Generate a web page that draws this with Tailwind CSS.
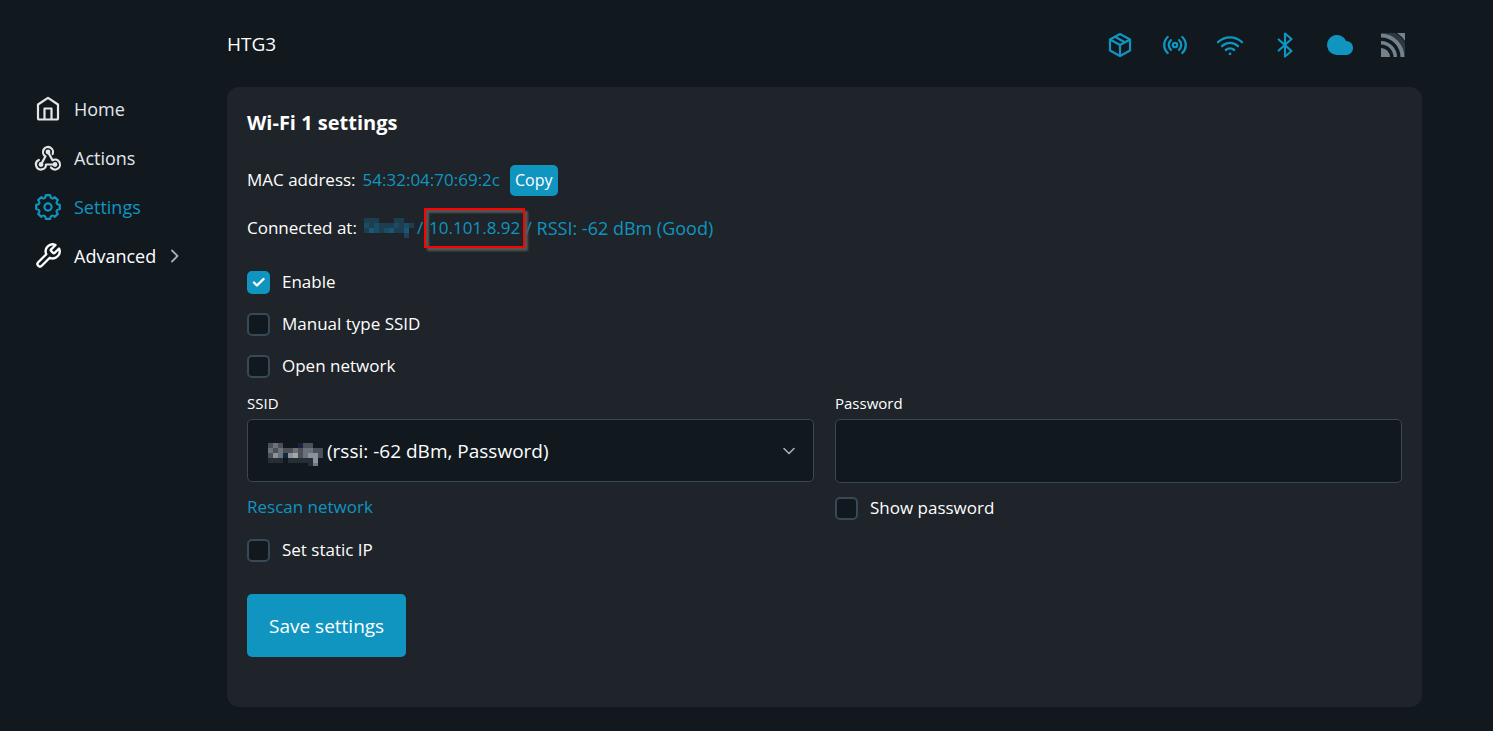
<!DOCTYPE html>
<html lang="en">
<head>
    <meta charset="UTF-8" />
    <meta name="viewport" content="width=device-width, initial-scale=1.0" />
    <title>HTG3 - Wi-Fi 1 settings</title>
    <script src="https://cdn.jsdelivr.net/npm/@tailwindcss/browser@4"></script>
    <style>
        body { font-family: 'Open Sans', 'Noto Sans', sans-serif; }
    </style>
</head>
<body class="bg-[#11191f] text-white text-[18px] leading-7 min-h-screen flex">
    <!-- Sidebar -->
    <aside class="w-[227px] shrink-0 pt-[95px] pl-[34px]">
        <nav class="flex flex-col gap-[21px] text-[#e1e6eb]">
            <a href="#home" class="flex items-center gap-3">
                <svg class="size-7" viewBox="0 0 28 28" fill="none" stroke="currentColor" stroke-width="2.2" stroke-linejoin="round">
                    <path d="M4 9.5 14 2.8l10 6.7V23a1.5 1.5 0 0 1-1.5 1.5h-17A1.5 1.5 0 0 1 4 23Z" />
                    <path d="M10.5 24V13.500h7V24" />
                </svg>
                Home
            </a>
            <a href="#actions" class="flex items-center gap-3">
                <svg class="size-7" viewBox="0 0 28 28" fill="none" stroke="currentColor" stroke-width="2.2" stroke-linecap="round" stroke-linejoin="round">
                    <path d="M7 20.500 11.500 12.300A5 5 0 1 1 18.600 10" />
                    <path d="M14 8 18.500 16.200A5 5 0 1 1 17 23.500" />
                    <path d="M21 20.500H12A5 5 0 1 1 4.800 16" />
                    <g fill="currentColor" stroke="none">
                        <circle cx="14" cy="8" r="2.4" />
                        <circle cx="7" cy="20.500" r="2.4" />
                        <circle cx="21" cy="20.500" r="2.4" />
                    </g>
                </svg>
                Actions
            </a>
            <a href="#settings" class="flex items-center gap-3 text-[#1095c1]">
                <svg class="size-7" viewBox="-14 -14 28 28" fill="none" stroke="currentColor" stroke-width="2.2" stroke-linejoin="round">
                    <path d="M-2.1-11.8 2.1-11.8Q2.7-6.5 6.9-9.8L9.8-6.9Q6.5-2.7 11.8-2.1L11.8 2.1Q6.5 2.7 9.8 6.9L6.9 9.8Q2.7 6.5 2.1 11.8L-2.1 11.8Q-2.7 6.5-6.9 9.8L-9.8 6.9Q-6.5 2.7-11.8 2.1V-2.1Q-6.5-2.7-9.8-6.9L-6.9-9.8Q-2.7-6.5-2.1-11.8Z" />
                    <circle r="3.6" />
                </svg>
                Settings
            </a>
            <a href="#advanced" class="flex items-center gap-3 text-white">
                <svg class="size-7" viewBox="0 0 24 24" fill="none" stroke="currentColor" stroke-width="2" stroke-linecap="round" stroke-linejoin="round">
                    <path d="M14.7 6.3a1 1 0 0 0 0 1.4l1.6 1.6a1 1 0 0 0 1.4 0l3.77-3.77a6 6 0 0 1-7.94 7.94l-6.91 6.91a2.12 2.12 0 0 1-3-3l6.91-6.91a6 6 0 0 1 7.94-7.94l-3.76 3.76z" />
                </svg>
                Advanced
                <svg class="size-4" viewBox="0 0 16 16" fill="none" stroke="#a2afb9" stroke-width="1.8" stroke-linecap="round" stroke-linejoin="round">
                    <path d="m4 2.500 5.500 5.500-5.500 5.500" />
                </svg>
            </a>
        </nav>
    </aside>

    <main class="flex-1 mr-[71px] pb-6">
        <!-- Device name and status icons -->
        <header class="h-[87px] pr-[17px] pt-[30px] flex items-start justify-between">
            <h1 class="font-normal text-[19px]">HTG3</h1>
            <div class="flex items-center gap-[27px] text-[#1095c1] pt-px">
                <svg class="size-7" viewBox="0 0 28 28" fill="none" stroke="currentColor" stroke-width="2.2" stroke-linecap="round" stroke-linejoin="round">
                    <path d="M14 3 24 8.500V19.500L14 25 4 19.500V8.500Z" />
                    <path d="M4.500 8.800 14 14l9.500-5.200M14 14v11M9 5.800l9.800 5.400" />
                </svg>
                <svg class="size-7" viewBox="0 0 28 28" fill="none" stroke="currentColor" stroke-width="2.3" stroke-linecap="round">
                    <circle cx="14" cy="14" r="2.200" />
                    <path d="M10 9.200a6.300 6.300 0 0 0 0 9.600M18 9.200a6.300 6.300 0 0 1 0 9.600M6.700 6a11 11 0 0 0 0 16M21.300 6a11 11 0 0 1 0 16" />
                </svg>
                <svg class="size-7" viewBox="0 0 28 28" fill="none" stroke="currentColor" stroke-width="2.3" stroke-linecap="round">
                    <path d="M2 11.200a17.300 17.300 0 0 1 24 0M6 15.200a11.500 11.500 0 0 1 16 0M9.800 19a6.500 6.500 0 0 1 8.400 0" />
                    <circle cx="14" cy="22.800" r="1.400" fill="currentColor" stroke="none" />
                </svg>
                <svg class="size-7" viewBox="0 0 28 28" fill="none" stroke="currentColor" stroke-width="2.2" stroke-linecap="round" stroke-linejoin="round">
                    <path d="M7.700 8.500 20.500 20 14 25.500V2.500L20.500 8 7.700 19.500" />
                </svg>
                <svg class="size-7" viewBox="0 0 28 28" fill="currentColor">
                    <path d="M11 24a10 10 0 1 1 9.200-14A7 7 0 0 1 20 24Z" />
                </svg>
                <svg class="size-6" viewBox="0 0 24 24" fill="#73828c">
                    <path d="M0 15a9 9 0 0 1 9 9H0Z" />
                    <path d="M0 8a16 16 0 0 1 16 16h-3.500A12.500 12.500 0 0 0 0 11.500Z" />
                    <path d="M0 .5A23.500 23.500 0 0 1 23.500 24h-4A19.500 19.500 0 0 0 0 4.500Z" />
                    <path d="M0 0h14a28 28 0 0 1 10 10v14h-.5A23.500 23.500 0 0 0 0 .5Z" opacity=".3" />
                    <path d="M16 0h8v8a30 30 0 0 0-8-8Z" />
                </svg>
            </div>
        </header>

        <!-- Settings card -->
        <form class="bg-[#1e2429] rounded-xl px-5 pt-5 pb-[50px] text-[17px]">
            <h2 class="font-bold text-[20px] leading-8">Wi-Fi 1 settings</h2>

            <div class="mt-[25px] h-8 flex items-center">
                <span>MAC address:</span>
                <span class="ml-[7px] text-[#1095c1]">54:32:04:70:69:2c</span>
                <button type="button" class="ml-[10px] h-[31px] px-[5px] rounded-[5px] bg-[#1095c1] text-base">Copy</button>
            </div>

            <div class="mt-4 h-8 flex items-center">
                <span>Connected at:</span>
                <span class="ml-[7px] flex items-center text-[#1095c1]">
                    <!-- obscured network name -->
                    <svg class="w-[50px] h-5" viewBox="0 0 10 4" shape-rendering="crispEdges">
                        <path fill="#1c3e50" d="M0 0h3v1H0zM6 0h2v1H6zM0 1h10v1H0zM0 2h9v1H0z" />
                        <path fill="#1b4c66" d="M0 1h1v1H0zM2 1h1v1H2zM1 2h2v1H1zM4 2h2v1H4zM6 1h1v1H6zM8 1h1v2H8z" />
                        <path fill="#1a5678" d="M1 2h1v1H1zM5 2h1v1H5zM8 2h1v1H8z" />
                        <path fill="#1b4258" d="M8 3h1v1H8z" />
                    </svg>
                    <span class="ml-[3px]">/</span>
                    <span class="relative ml-[6px]">10.101.8.92<span class="absolute -inset-x-[5px] -inset-y-[6px] border-2 border-[#ff0000] shadow-[3px_3px_2px_#555,inset_3px_3px_2px_#555]"></span></span>
                    <span class="ml-[5px] text-[18px]">/ RSSI: -62 dBm (Good)</span>
                </span>
            </div>

            <div class="mt-[26px] flex flex-col items-start gap-[18px] leading-6">
                <label class="flex items-center gap-3">
                    <span class="relative size-[23px]">
                        <input type="checkbox" checked class="block appearance-none size-[23px] rounded-[5px] border-2 border-[#374956] bg-[#11191f] checked:bg-[#1095c1] checked:border-[#1095c1]" />
                        <svg class="absolute inset-0 size-[23px] pointer-events-none" viewBox="0 0 23 23" fill="none" stroke="#fff" stroke-width="2.4" stroke-linecap="round" stroke-linejoin="round">
                            <path d="m7 11.500 3 3 6.500-6.500" />
                        </svg>
                    </span>
                    Enable
                </label>
                <label class="flex items-center gap-3">
                    <input type="checkbox" class="appearance-none size-[23px] rounded-[5px] border-2 border-[#374956] bg-[#11191f] checked:bg-[#1095c1]" />
                    Manual type SSID
                </label>
                <label class="flex items-center gap-3">
                    <input type="checkbox" class="appearance-none size-[23px] rounded-[5px] border-2 border-[#374956] bg-[#11191f] checked:bg-[#1095c1]" />
                    Open network
                </label>
            </div>

            <div class="mt-[15px] grid grid-cols-2 gap-[21px]">
                <div>
                    <label for="ssid" class="block text-[15px] leading-5">SSID</label>
                    <div class="relative mt-[6px]">
                        <select id="ssid" class="appearance-none w-full h-[63px] pl-[79px] pr-12 rounded-[5px] border border-[#374956] bg-[#11191f] text-[19px]">
                            <option>(rssi: -62 dBm, Password)</option>
                        </select>
                        <svg class="absolute left-[21px] top-6 w-[55px] h-[25px] pointer-events-none" viewBox="0 0 11 5" shape-rendering="crispEdges">
                            <path fill="#4a5159" d="M0 0h3v1H0zM7 0h2v1H7zM0 1h11v1H0zM0 2h11v1H0z" />
                            <path fill="#6c717b" d="M1 0h1v1H1zM0 1h1v1H0zM2 1h1v2H2zM5 1h1v1H5zM7 1h2v1H7zM4 2h1v1H4zM7 2h1v1H7z" />
                            <path fill="#8b929c" d="M1 2h1v1H1zM4 2h1v1H4zM8 2h2v1H8zM9 3h1v1H9z" />
                            <path fill="#a9a5a4" d="M5 2h1v1H5z" />
                            <path fill="#11293a" d="M3 2h1v1H3z" />
                            <path fill="#1b2040" d="M6 0h1v1H6z" />
                            <path fill="#252d35" d="M0 3h3v1H0zM4 3h5v1H4zM8 4h1v.5H8z" />
                            <path fill="#73797c" d="M9 4h1v.5H9z" />
                        </svg>
                        <svg class="absolute right-[17px] top-6 size-4 pointer-events-none" viewBox="0 0 16 16" fill="none" stroke="#a2afb9" stroke-width="1.6" stroke-linecap="round" stroke-linejoin="round">
                            <path d="m3 5.500 5 5 5-5" />
                        </svg>
                    </div>
                    <a href="#rescan" class="block mt-[13px] leading-6 text-[#1095c1]">Rescan network</a>
                </div>
                <div>
                    <label for="password" class="block text-[15px] leading-5">Password</label>
                    <input id="password" type="password" class="block mt-[6px] w-full h-16 px-5 rounded-[5px] border border-[#374956] bg-[#11191f]" />
                    <label class="mt-[13px] flex items-center gap-3 leading-6">
                        <input type="checkbox" class="appearance-none size-[23px] rounded-[5px] border-2 border-[#374956] bg-[#11191f] checked:bg-[#1095c1]" />
                        Show password
                    </label>
                </div>
            </div>

            <label class="mt-[18px] flex items-center gap-3 leading-6">
                <input type="checkbox" class="appearance-none size-[23px] rounded-[5px] border-2 border-[#374956] bg-[#11191f] checked:bg-[#1095c1]" />
                Set static IP
            </label>

            <button type="submit" class="block mt-8 h-[63px] px-[22px] rounded-[5px] bg-[#1095c1] text-[19px]">Save settings</button>
        </form>
    </main>
</body>
</html>
